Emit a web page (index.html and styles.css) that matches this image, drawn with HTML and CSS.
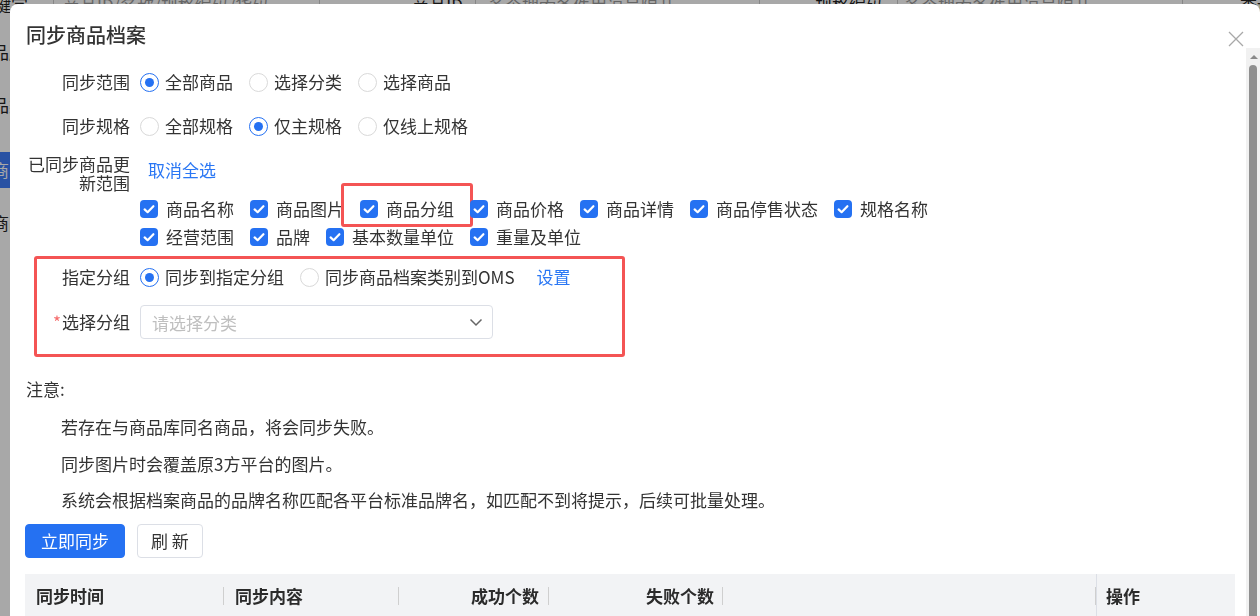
FILE: index.html
```html
<!DOCTYPE html>
<html lang="zh-CN">

<head>
    <meta charset="UTF-8">
    <meta name="viewport" content="width=device-width, initial-scale=1.0">
    <title>同步商品档案</title>
    <link rel="stylesheet" href="styles.css">
</head>

<body>

    <!-- page behind the dialog -->
    <div class="page">
        <div class="search-bar">
            <span class="sb-label sb-first">关键字</span>
            <div class="sb-input sb-input1">商品ID/名称/规格编码/货码</div>
            <span class="sb-label sb-label2">商品ID</span>
            <div class="sb-input sb-input2">多个搜索条件用逗号隔开</div>
            <span class="sb-label sb-label3">规格编码</span>
            <div class="sb-input sb-input3">多个搜索条件用逗号隔开</div>
            <span class="sb-btn">查询</span>
        </div>
        <ul class="side-nav">
            <li>品牌:</li>
            <li>品类:</li>
            <li class="active">商品</li>
            <li>商品</li>
        </ul>
    </div>

    <div class="mask"></div>

    <div class="dialog">
        <div class="dialog-header">
            <span class="dialog-title">同步商品档案</span>
            <span class="dialog-close">
                <svg width="16" height="16" viewBox="0 0 16 16">
                    <path d="M1 1L15 15M15 1L1 15" stroke="#a8a8a8" stroke-width="1.3" fill="none" />
                </svg>
            </span>
        </div>

        <div class="dialog-main">
            <div class="dialog-body">

                <div class="form-item">
                    <label class="form-label">同步范围</label>
                    <div class="radio-group">
                        <label class="radio checked"><span class="radio-inner"></span>全部商品</label>
                        <label class="radio"><span class="radio-inner"></span>选择分类</label>
                        <label class="radio"><span class="radio-inner"></span>选择商品</label>
                    </div>
                </div>

                <div class="form-item">
                    <label class="form-label">同步规格</label>
                    <div class="radio-group">
                        <label class="radio"><span class="radio-inner"></span>全部规格</label>
                        <label class="radio checked"><span class="radio-inner"></span>仅主规格</label>
                        <label class="radio"><span class="radio-inner"></span>仅线上规格</label>
                    </div>
                </div>

                <div class="form-item form-item-top">
                    <label class="form-label form-label-wrap">已同步商品更新范围</label>
                    <div class="form-content">
                        <a class="link link-toggle">取消全选</a>
                        <div class="checkbox-group">
                            <label class="checkbox"><span class="checkbox-inner"></span>商品名称</label>
                            <label class="checkbox"><span class="checkbox-inner"></span>商品图片</label>
                            <label class="checkbox marked"><span class="checkbox-inner"></span>商品分组</label>
                            <label class="checkbox"><span class="checkbox-inner"></span>商品价格</label>
                            <label class="checkbox"><span class="checkbox-inner"></span>商品详情</label>
                            <label class="checkbox"><span class="checkbox-inner"></span>商品停售状态</label>
                            <label class="checkbox"><span class="checkbox-inner"></span>规格名称</label>
                            <label class="checkbox"><span class="checkbox-inner"></span>经营范围</label>
                            <label class="checkbox"><span class="checkbox-inner"></span>品牌</label>
                            <label class="checkbox"><span class="checkbox-inner"></span>基本数量单位</label>
                            <label class="checkbox"><span class="checkbox-inner"></span>重量及单位</label>
                        </div>
                    </div>
                </div>

                <div class="highlight">
                    <div class="form-item">
                        <label class="form-label">指定分组</label>
                        <div class="radio-group">
                            <label class="radio checked"><span class="radio-inner"></span>同步到指定分组</label>
                            <label class="radio"><span class="radio-inner"></span>同步商品档案类别到OMS</label>
                            <a class="link link-set">设置</a>
                        </div>
                    </div>

                    <div class="form-item form-item-select">
                        <label class="form-label"><span class="required">*</span>选择分组</label>
                        <div class="select">
                            <span class="select-placeholder">请选择分类</span>
                            <svg width="14" height="14" viewBox="0 0 14 14">
                                <path d="M1.5 4.5L7 10L12.5 4.5" stroke="#666" stroke-width="1.5" fill="none" />
                            </svg>
                        </div>
                    </div>
                </div>

                <div class="notice">
                    <div class="notice-title">注意:</div>
                    <p>若存在与商品库同名商品，将会同步失败。</p>
                    <p>同步图片时会覆盖原3方平台的图片。</p>
                    <p>系统会根据档案商品的品牌名称匹配各平台标准品牌名，如匹配不到将提示，后续可批量处理。</p>
                </div>

                <div class="actions">
                    <button class="btn btn-primary">立即同步</button>
                    <button class="btn">刷 新</button>
                </div>

                <div class="table-header">
                    <div class="th th-time">同步时间</div>
                    <div class="th th-content">同步内容</div>
                    <div class="th th-success">成功个数</div>
                    <div class="th th-fail">失败个数</div>
                    <div class="th th-blank"></div>
                    <div class="th th-op">操作</div>
                </div>

            </div>

            <div class="scrollbar">
                <span class="scroll-arrow"></span>
                <span class="scroll-thumb"></span>
            </div>
        </div>
    </div>

</body>

</html>
```

FILE: styles.css
```css
/* Global Styles */
body {
    font-family: "Noto Sans CJK SC", "Noto Sans", sans-serif;
    font-size: 17px;
    color: #333;
    background-color: #fff;
    margin: 0;
    padding: 0;
    height: 616px;
    overflow: hidden;
}

/* Page behind the dialog */
.page {
    color: #222;
}

.search-bar {
    display: flex;
    align-items: center;
    height: 34px;
    margin-top: -12px;
    white-space: nowrap;
}

.sb-label {
    line-height: 34px;
    text-align: right;
    flex-shrink: 0;
}

.sb-first {
    margin-left: -23px;
    width: 51px;
}

.sb-label2 {
    width: 145px;
    padding-right: 2px;
    box-sizing: border-box;
}

.sb-label3 {
    width: 125px;
    padding-right: 2px;
    box-sizing: border-box;
}

.sb-input {
    height: 34px;
    line-height: 32px;
    border: 1px solid #ccc;
    box-sizing: border-box;
    color: #999;
    overflow: hidden;
    flex-shrink: 0;
}

.sb-input1 {
    margin-left: 25px;
    width: 267px;
    padding-left: 9px;
}

.sb-input2 {
    margin-left: 10px;
    width: 285px;
    padding-left: 12px;
}

.sb-input3 {
    margin-left: 12px;
    width: 286px;
    padding-left: 6px;
}

.sb-btn {
    margin-left: 57px;
    line-height: 34px;
}

.side-nav {
    list-style: none;
    margin: 0;
    padding: 12px 0 0;
    width: 120px;
}

.side-nav li {
    height: 36px;
    line-height: 36px;
    margin-bottom: 17px;
    text-indent: -8px;
    overflow: hidden;
}

.side-nav li.active {
    margin-top: 29px;
    background-color: #3d7cf7;
    color: #fff;
}

.mask {
    position: fixed;
    inset: 0;
    background-color: rgba(0, 0, 0, 0.34);
}

/* Dialog */
.dialog {
    position: fixed;
    left: 10px;
    top: 4px;
    width: 1250px;
    height: 680px;
    background-color: #fff;
    border-radius: 8px;
    display: flex;
    flex-direction: column;
    overflow: hidden;
}

.dialog-header {
    height: 44px;
    padding: 19px 16px 0;
    box-sizing: border-box;
    display: flex;
    justify-content: space-between;
}

.dialog-title {
    font-size: 20px;
    line-height: 24px;
    font-weight: 500;
    color: #333;
}

.dialog-close {
    width: 16px;
    height: 16px;
    margin-top: 4px;
}

.dialog-main {
    flex: 1;
    display: flex;
}

.dialog-body {
    flex: 1;
    padding: 18px 11px 0 15px;
}

/* Fake scrollbar */
.scrollbar {
    width: 14px;
    background-color: #f1f1f1;
    display: flex;
    flex-direction: column;
    align-items: flex-start;
}

.scroll-arrow {
    margin: 7px 0 0 4px;
    width: 0;
    height: 0;
    border-left: 4px solid transparent;
    border-right: 4px solid transparent;
    border-bottom: 4px solid #8a8a8a;
}

.scroll-thumb {
    margin: 6px 0 0 3px;
    width: 8px;
    flex: 1;
    background-color: #8f8f8f;
    border-radius: 4px 4px 0 0;
}

/* Form */
.form-item {
    display: flex;
    align-items: center;
    min-height: 32px;
    margin-bottom: 12px;
}

.form-item-top {
    align-items: flex-start;
    margin-bottom: 0;
}

.form-label {
    width: 115px;
    padding-right: 10px;
    box-sizing: border-box;
    text-align: right;
    line-height: 32px;
    color: #333;
    flex-shrink: 0;
}

.form-label-wrap {
    line-height: 19px;
}

.required {
    color: #f56c6c;
    margin-right: 1px;
}

.radio-group {
    display: flex;
    align-items: center;
    gap: 16px;
    white-space: nowrap;
}

.radio {
    display: flex;
    align-items: center;
    gap: 6px;
    line-height: 32px;
}

.radio-inner {
    width: 19px;
    height: 19px;
    border: 1px solid #d9d9d9;
    border-radius: 50%;
    box-sizing: border-box;
    background-color: #fff;
    display: flex;
    align-items: center;
    justify-content: center;
}

.radio.checked .radio-inner {
    border-color: #2571f2;
}

.radio.checked .radio-inner::after {
    content: "";
    width: 9px;
    height: 9px;
    border-radius: 50%;
    background-color: #2571f2;
}

.link {
    color: #2a77f4;
    line-height: 32px;
    cursor: pointer;
}

.link-toggle {
    margin-left: 8px;
}

.link-set {
    margin-left: 6px;
}

.form-content {
    display: flex;
    flex-direction: column;
    align-items: flex-start;
}

.checkbox-group {
    display: flex;
    flex-wrap: wrap;
    column-gap: 16px;
    max-width: 880px;
    margin-top: 9px;
}

.checkbox {
    display: flex;
    align-items: center;
    gap: 8px;
    line-height: 28px;
    white-space: nowrap;
    position: relative;
}

.checkbox-inner {
    width: 18px;
    height: 18px;
    border-radius: 4px;
    background-color: #2571f2;
    background-image: url("data:image/svg+xml,%3Csvg xmlns='http://www.w3.org/2000/svg' width='18' height='18' viewBox='0 0 18 18'%3E%3Cpath d='M4.6 9.4L7.6 12.2L13.4 6.2' stroke='%23fff' stroke-width='2.2' fill='none' stroke-linecap='round' stroke-linejoin='round'/%3E%3C/svg%3E");
}

/* red annotation boxes */
.checkbox.marked::after {
    content: "";
    position: absolute;
    left: -19px;
    top: -12px;
    width: 132px;
    height: 44px;
    border: 3px solid #f45454;
    border-radius: 3px;
    box-sizing: border-box;
}

.highlight {
    position: relative;
    margin-top: 10px;
}

.highlight::after {
    content: "";
    position: absolute;
    left: 9px;
    top: -5px;
    width: 591px;
    height: 101px;
    border: 3px solid #f45454;
    border-radius: 3px;
    box-sizing: border-box;
}

.form-item-select {
    margin-bottom: 0;
}

.select {
    width: 353px;
    height: 34px;
    border: 1px solid #dcdfe6;
    border-radius: 4px;
    box-sizing: border-box;
    padding: 0 9px 0 11px;
    display: flex;
    align-items: center;
    justify-content: space-between;
}

.select-placeholder {
    color: #bfbfbf;
}

/* Notice */
.notice {
    margin-top: 38px;
}

.notice-title {
    line-height: 24px;
    padding-left: 1px;
}

.notice p {
    margin: 0;
    padding-left: 36px;
    line-height: 36.5px;
}

.notice-title + p {
    margin-top: 8px;
}

/* Buttons */
.actions {
    display: flex;
    gap: 12px;
    margin-top: 5px;
}

.btn {
    height: 34px;
    padding: 0 13px;
    font-family: inherit;
    font-size: 17px;
    color: #333;
    background-color: #fff;
    border: 1px solid #dcdfe6;
    border-radius: 4px;
}

.btn-primary {
    padding: 0 15px;
    color: #fff;
    background-color: #2571f2;
    border-color: #2571f2;
}

/* Table */
.table-header {
    display: flex;
    height: 44px;
    margin-top: 16px;
    background-color: #f2f3f5;
}

.th {
    position: relative;
    line-height: 44px;
    font-weight: 700;
    color: #2b2b2b;
    padding: 0 10px 0 11px;
    box-sizing: border-box;
    flex-shrink: 0;
}

.th::after {
    content: "";
    position: absolute;
    right: 0;
    top: 13px;
    width: 1px;
    height: 18px;
    background-color: #cfcfcf;
}

.th-time {
    width: 199px;
}

.th-content {
    width: 175px;
}

.th-success {
    width: 150px;
    text-align: right;
}

.th-fail {
    width: 174px;
    text-align: right;
    padding-right: 9px;
}

.th-blank {
    width: 373px;
}

.th-op {
    width: 139px;
    border-left: 1px solid #dcdfe6;
    padding-left: 9px;
}

.th-op::after {
    display: none;
}
```
